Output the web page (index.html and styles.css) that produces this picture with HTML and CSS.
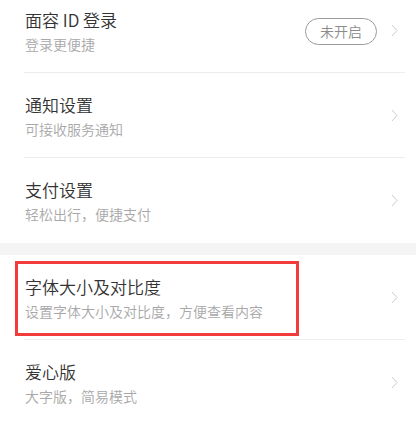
FILE: index.html
```html
<!DOCTYPE html>
<html lang="zh-CN">
<head>
<meta charset="utf-8">
<link rel="stylesheet" href="styles.css">
</head>
<body>
<div class="list">
  <div class="row first">
    <div class="text">
      <div class="title">面容 ID 登录</div>
      <div class="sub">登录更便捷</div>
    </div>
    <span class="badge">未开启</span>
    <svg class="chev" width="7" height="13" viewBox="0 0 7 13"><polyline points="1,1 6,6.5 1,12" fill="none" stroke="#cccccc" stroke-width="1"/></svg>
  </div>
  <div class="row">
    <div class="text">
      <div class="title">通知设置</div>
      <div class="sub">可接收服务通知</div>
    </div>
    <svg class="chev" width="7" height="13" viewBox="0 0 7 13"><polyline points="1,1 6,6.5 1,12" fill="none" stroke="#cccccc" stroke-width="1"/></svg>
  </div>
  <div class="row last">
    <div class="text">
      <div class="title">支付设置</div>
      <div class="sub">轻松出行，便捷支付</div>
    </div>
    <svg class="chev" width="7" height="13" viewBox="0 0 7 13"><polyline points="1,1 6,6.5 1,12" fill="none" stroke="#cccccc" stroke-width="1"/></svg>
  </div>
</div>
<div class="band"></div>
<div class="list">
  <div class="row marked">
    <div class="text">
      <div class="title">字体大小及对比度</div>
      <div class="sub">设置字体大小及对比度，方便查看内容</div>
    </div>
    <svg class="chev" width="7" height="13" viewBox="0 0 7 13"><polyline points="1,1 6,6.5 1,12" fill="none" stroke="#cccccc" stroke-width="1"/></svg>
    <div class="highlight"></div>
  </div>
  <div class="row">
    <div class="text">
      <div class="title">爱心版</div>
      <div class="sub">大字版，简易模式</div>
    </div>
    <svg class="chev" width="7" height="13" viewBox="0 0 7 13"><polyline points="1,1 6,6.5 1,12" fill="none" stroke="#cccccc" stroke-width="1"/></svg>
  </div>
</div>
</body>
</html>
```
FILE: styles.css
```css
html, body {
  margin: 0;
  padding: 0;
  background: #ffffff;
  font-family: "Noto Sans CJK SC", "Noto Sans", sans-serif;
  overflow: hidden;
}
.list {
  display: flex;
  flex-direction: column;
}
.row {
  position: relative;
  box-sizing: border-box;
  height: 85px;
  display: flex;
  align-items: center;
  padding: 0 18px 0 25px;
}
.row::after {
  content: "";
  position: absolute;
  left: 24px;
  right: 11px;
  bottom: 0;
  height: 1px;
  background: #ededed;
}
.row.last::after {
  display: none;
}
.row.first {
  margin-top: -12px;
}
.text {
  flex: 1;
  display: flex;
  flex-direction: column;
  gap: 2px;
}
.title {
  font-size: 17px;
  line-height: 24px;
  font-weight: 350;
  color: #333333;
}
.sub {
  font-size: 14px;
  line-height: 20px;
  font-weight: 350;
  color: #a8a8a8;
}
.badge {
  box-sizing: border-box;
  height: 27px;
  padding: 0 14px;
  border: 1px solid #9a9a9a;
  border-radius: 14px;
  font-size: 14px;
  line-height: 25px;
  font-weight: 350;
  color: #8c8c8c;
  margin-right: 14px;
  margin-top: 1px;
}
.chev {
  display: block;
  flex: none;
}
.band {
  height: 12px;
  background: #f4f4f4;
}
.highlight {
  position: absolute;
  left: 15px;
  top: 6px;
  width: 284px;
  height: 75px;
  box-sizing: border-box;
  border: 3px solid #f23b3b;
}
```
